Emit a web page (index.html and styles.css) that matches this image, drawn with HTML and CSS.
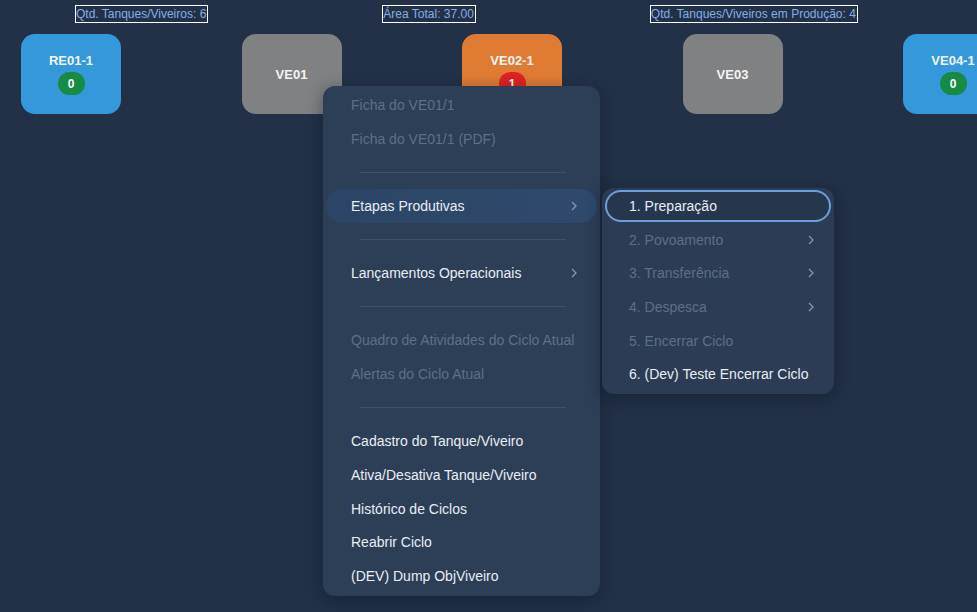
FILE: index.html
```html
<!DOCTYPE html>
<html lang="pt-BR">
<head>
<meta charset="utf-8">
<title>Viveiros</title>
<link rel="stylesheet" href="styles.css">
</head>
<body>
<div class="stats">
  <span class="stat">Qtd. Tanques/Viveiros: 6</span>
  <span class="stat">Área Total: 37.00</span>
  <span class="stat">Qtd. Tanques/Viveiros em Produção: 4</span>
</div>
<div class="tanks">
  <div class="tank blue"><span class="tank-name">RE01-1</span><span class="badge green">0</span></div>
  <div class="tank grey"><span class="tank-name">VE01</span></div>
  <div class="tank orange"><span class="tank-name">VE02-1</span><span class="badge red">1</span></div>
  <div class="tank grey"><span class="tank-name">VE03</span></div>
  <div class="tank blue"><span class="tank-name">VE04-1</span><span class="badge green">0</span></div>
</div>

<div class="menu main-menu">
  <div class="item disabled">Ficha do VE01/1</div>
  <div class="item disabled">Ficha do VE01/1 (PDF)</div>
  <div class="sep"></div>
  <div class="item active">Etapas Produtivas<svg class="chev" viewBox="0 0 6 10"><polyline points="1,1 5,5 1,9"/></svg></div>
  <div class="sep"></div>
  <div class="item">Lançamentos Operacionais<svg class="chev" viewBox="0 0 6 10"><polyline points="1,1 5,5 1,9"/></svg></div>
  <div class="sep"></div>
  <div class="item disabled">Quadro de Atividades do Ciclo Atual</div>
  <div class="item disabled">Alertas do Ciclo Atual</div>
  <div class="sep"></div>
  <div class="item">Cadastro do Tanque/Viveiro</div>
  <div class="item">Ativa/Desativa Tanque/Viveiro</div>
  <div class="item">Histórico de Ciclos</div>
  <div class="item">Reabrir Ciclo</div>
  <div class="item">(DEV) Dump ObjViveiro</div>
</div>

<div class="menu sub-menu">
  <div class="item focused">1. Preparação</div>
  <div class="item disabled">2. Povoamento<svg class="chev" viewBox="0 0 6 10"><polyline points="1,1 5,5 1,9"/></svg></div>
  <div class="item disabled">3. Transferência<svg class="chev" viewBox="0 0 6 10"><polyline points="1,1 5,5 1,9"/></svg></div>
  <div class="item disabled">4. Despesca<svg class="chev" viewBox="0 0 6 10"><polyline points="1,1 5,5 1,9"/></svg></div>
  <div class="item disabled">5. Encerrar Ciclo</div>
  <div class="item">6. (Dev) Teste Encerrar Ciclo</div>
</div>
</body>
</html>
```

FILE: styles.css
```css
html, body {
  margin: 0;
  padding: 0;
}
body {
  width: 977px;
  height: 612px;
  overflow: hidden;
  background: #223148;
  font-family: "Liberation Sans", Arial, sans-serif;
  position: relative;
}
.stats {
  display: flex;
  gap: 174px;
  padding: 5px 0 0 75px;
}
.stat {
  border: 1px solid #ffffff;
  color: #86aee6;
  font-size: 12px;
  line-height: 16px;
  padding: 0 1px 0 0;
  white-space: nowrap;
}
.tanks {
  display: flex;
  gap: 120.5px;
  padding-left: 21px;
  margin-top: 11px;
}
.tank {
  flex: 0 0 100px;
  height: 80px;
  border-radius: 14px;
  display: flex;
  flex-direction: column;
  align-items: center;
  justify-content: center;
  gap: 4px;
  color: #f2f5f8;
}
.tank-name {
  font-size: 13px;
  font-weight: bold;
  line-height: 15px;
}
.blue { background: #3498db; }
.grey { background: #7f8182; }
.orange { background: #e07b34; }
.badge {
  min-width: 27px;
  height: 23px;
  border-radius: 12px;
  display: flex;
  align-items: center;
  justify-content: center;
  font-size: 12px;
  font-weight: bold;
  color: #ffffff;
}
.green { background: #178a43; }
.red { background: #e02222; }

.menu {
  position: absolute;
  background: #2d3e57;
  border-radius: 12px;
  box-shadow: 0 4px 16px rgba(10, 18, 30, 0.45);
  box-sizing: border-box;
}
.main-menu {
  left: 323px;
  top: 86px;
  width: 277px;
  height: 510px;
  padding: 2.2px 3px 3px;
}
.sub-menu {
  left: 602px;
  top: 188px;
  width: 232px;
  height: 206px;
  padding: 1.2px 3px 3px;
  background: #2c3c54;
}
.item {
  height: 33.65px;
  display: flex;
  align-items: center;
  justify-content: space-between;
  padding: 0 20px 0 25px;
  box-sizing: border-box;
  font-size: 14px;
  color: #e9eef5;
  white-space: nowrap;
  border-radius: 17px;
}
.sub-menu .item {
  padding: 0 17px 0 24px;
}
.item.disabled {
  color: #5e6f87;
}
.item.active {
  background: linear-gradient(90deg, #2c4566, #2f4a6d);
}
.sub-menu .item.focused {
  border: 2px solid #6c9fdb;
  padding-left: 22px;
  background: #26364d;
  height: 32px;
  margin-top: 0.8px;
  margin-bottom: 0.85px;
}
.sep {
  height: 33.65px;
  display: flex;
  align-items: center;
}
.sep::before {
  content: "";
  display: block;
  height: 1px;
  background: #3f5069;
  margin: 0 31px 0 34px;
  flex: 1;
}
.chev {
  width: 6px;
  height: 10px;
  fill: none;
  stroke: #8797ae;
  stroke-width: 1.3;
}
```
